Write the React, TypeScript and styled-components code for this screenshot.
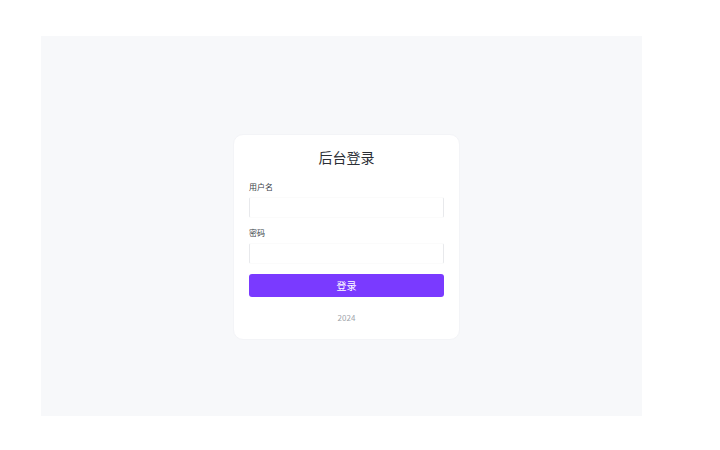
import styled, { createGlobalStyle } from "styled-components";

const GlobalStyle = createGlobalStyle`
  html, body {
    margin: 0;
    padding: 0;
    background: #ffffff;
    font-family: "Noto Sans CJK SC", "Noto Sans", sans-serif;
  }
`;

const Page = styled.div`
  width: 720px;
  height: 450px;
  padding: 36px 0 0 41px;
  box-sizing: border-box;
`;

const Backdrop = styled.div`
  width: 601px;
  height: 380px;
  background: #f7f8fa;
  display: flex;
  justify-content: center;
  align-items: center;
  padding: 22px 0 0 10px;
  box-sizing: border-box;
`;

const Card = styled.div`
  width: 227px;
  height: 206px;
  box-sizing: border-box;
  background: #ffffff;
  border-radius: 10px;
  border: 1px solid #f3f4f7;
  padding: 12px 15px 0;
  display: flex;
  flex-direction: column;
`;

const Title = styled.h1`
  margin: 0 0 14px;
  font-size: 14px;
  font-weight: 400;
  line-height: 20px;
  color: #2b2f36;
  text-align: center;
`;

const Field = styled.div`
  display: flex;
  flex-direction: column;
  gap: 5px;
  margin-bottom: 9px;
`;

const Label = styled.label`
  font-size: 8px;
  line-height: 11px;
  color: #3a3f47;
`;

const Input = styled.input`
  height: 21px;
  box-sizing: border-box;
  border: 1px solid #fbfbfb;
  border-left-color: #e8e9ec;
  border-right-color: #e8e9ec;
  border-radius: 2px;
  background: #ffffff;
  outline: none;
  padding: 0 6px;
  font-size: 9px;
`;

const Button = styled.button`
  height: 23px;
  margin-top: 1px;
  border: none;
  border-radius: 3px;
  background: #7a3aff;
  color: #ffffff;
  font-family: inherit;
  font-size: 10px;
  cursor: pointer;
`;

const Footer = styled.div`
  margin-top: 15px;
  text-align: center;
  font-size: 8px;
  line-height: 12px;
  color: #a0a4ab;
`;

export default function App() {
  return (
    <>
      <GlobalStyle />
      <Page>
        <Backdrop>
          <Card>
            <Title>后台登录</Title>
            <Field>
              <Label>用户名</Label>
              <Input type="text" />
            </Field>
            <Field>
              <Label>密码</Label>
              <Input type="password" />
            </Field>
            <Button>登录</Button>
            <Footer>2024</Footer>
          </Card>
        </Backdrop>
      </Page>
    </>
  );
}
